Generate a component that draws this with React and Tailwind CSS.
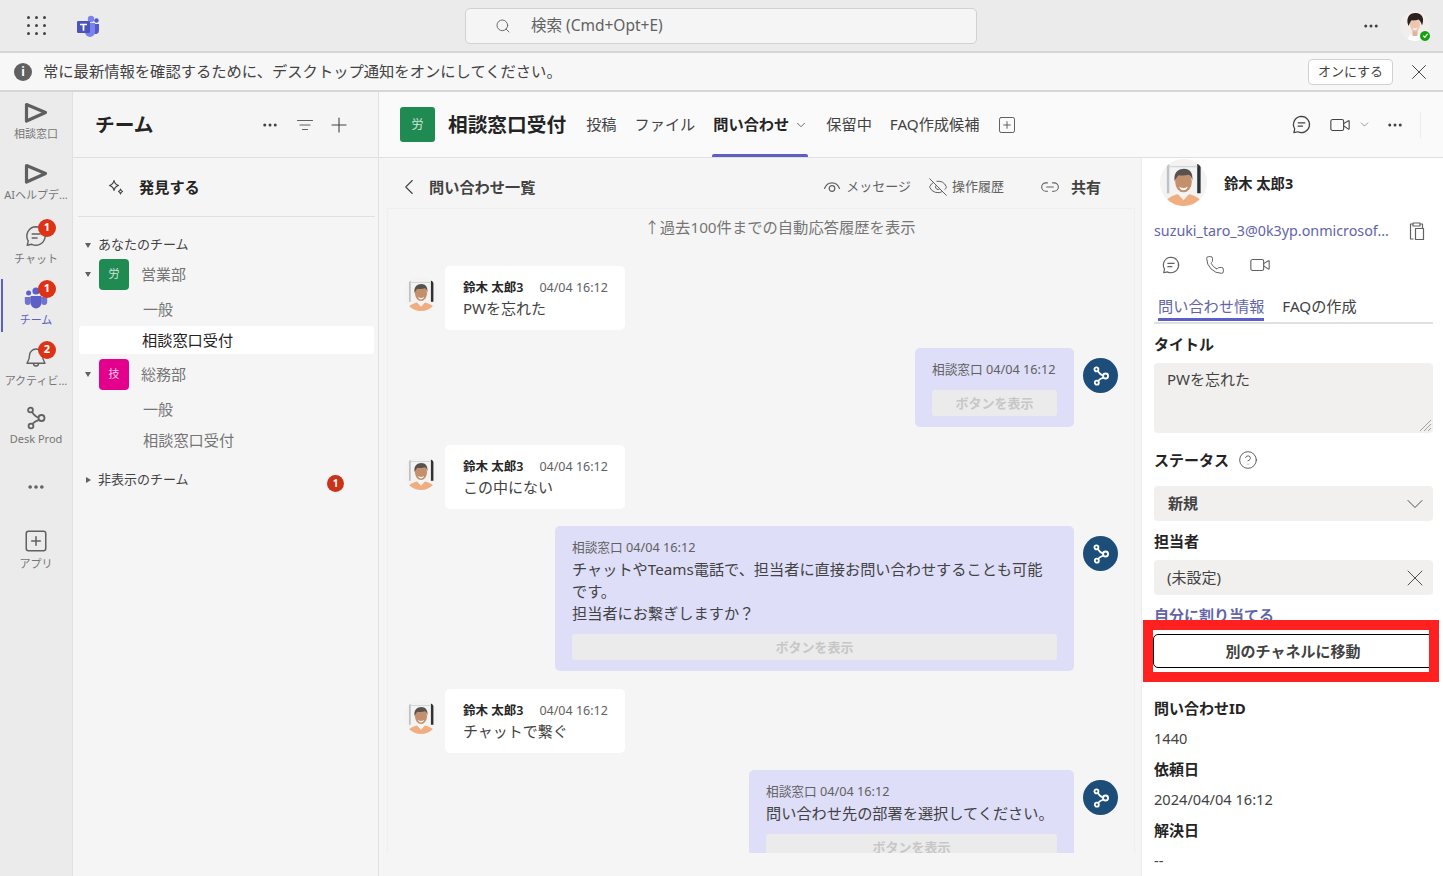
import React from 'react';
import {
  ChevronDown,
  ChevronLeft,
  CircleHelp,
  Ellipsis,
  EyeOff,
  Link2,
  Phone,
  Plus,
  Search,
  SquarePlus,
  Video,
  X,
} from 'lucide-react';

const FONT = { fontFamily: '"Noto Sans", "Noto Sans CJK JP", sans-serif' };

function PlayLogo() {
  return (
    <svg width="24" height="22" viewBox="0 0 24 22" fill="none">
      <path d="M2.5 2.5 L21.5 10.5 L2.5 19 Z" stroke="#5f5f5f" strokeWidth="3.2" strokeLinejoin="round" />
    </svg>
  );
}

function ChatIcon({ size = 22, color = '#424242' }) {
  return (
    <svg width={size} height={size} viewBox="0 0 22 22" fill="none" stroke={color} strokeWidth="1.3" strokeLinecap="round">
      <path d="M11 2.5a8.5 8.5 0 1 1-3.9 16.1L3 19.5l.9-4A8.5 8.5 0 0 1 11 2.5Z" strokeLinejoin="round" />
      <path d="M7.5 9.2h7M7.5 12.8h4.5" />
    </svg>
  );
}

function NodesIcon({ size = 24, color = '#616161', width = 1.8 }) {
  return (
    <svg width={size} height={size} viewBox="0 0 24 24" fill="none" stroke={color} strokeWidth={width}>
      <circle cx="6.5" cy="4" r="2.4" />
      <circle cx="17.5" cy="12" r="3" />
      <circle cx="7" cy="20" r="2.4" />
      <path d="M8 6 C10 9 12 11 14.6 11.6 M15 13.8 C12 14.8 9.8 16 8.2 18" />
    </svg>
  );
}

function TeamsIcon() {
  return (
    <svg width="24" height="22" viewBox="0 0 24 22">
      <circle cx="15" cy="4" r="3.2" fill="#7b83eb" />
      <circle cx="20.5" cy="5.5" r="2.2" fill="#5059c9" />
      <path d="M17 9h6v6.5a3.5 3.5 0 0 1-6 2.5Z" fill="#5059c9" />
      <path d="M9 8h10v9a5 5 0 0 1-10 0Z" fill="#7b83eb" />
      <rect x="1" y="6" width="13" height="12" rx="1.2" fill="#4b53bc" />
      <path d="M4 8.7h7v1.6H8.4v5.5H6.6v-5.5H4Z" fill="#fff" />
    </svg>
  );
}

function TeamPeopleIcon() {
  return (
    <svg width="24" height="24" viewBox="0 0 24 24" fill="#5b5fc7">
      <circle cx="12" cy="6" r="3.6" />
      <circle cx="4.6" cy="8" r="2.5" />
      <circle cx="19.4" cy="8" r="2.5" />
      <path d="M0.8 12h6v5a3 3 0 0 1-6 0Z" opacity="0.85" />
      <path d="M17.2 12h6v5a3 3 0 0 1-6 0Z" opacity="0.85" />
      <path d="M6.6 11h10.8v7a5.4 5.4 0 0 1-10.8 0Z" />
    </svg>
  );
}

function BellIcon() {
  return (
    <svg width="24" height="24" viewBox="0 0 24 24" fill="none" stroke="#616161" strokeWidth="1.4" strokeLinejoin="round">
      <path d="M12 3a6.5 6.5 0 0 0-6.5 6.5c0 4-1.6 6.3-2.5 7.8h18c-.9-1.5-2.5-3.8-2.5-7.8A6.5 6.5 0 0 0 12 3Z" />
      <path d="M9.5 17.5a2.5 2.5 0 0 0 5 0" />
    </svg>
  );
}

function ManAvatar({ size = 34 }) {
  return (
    <div className="shrink-0 rounded-full overflow-hidden" style={{ width: size, height: size }}>
      <svg width={size} height={size} viewBox="0 0 48 48">
        <rect width="48" height="48" fill="#f4f3f1" />
        <rect x="7" y="5" width="2.5" height="30" fill="#b9c4c9" />
        <rect x="38" y="5" width="3.5" height="30" fill="#2b3236" />
        <rect x="9" y="7" width="29" height="1.5" fill="#cfd8dc" />
        <path d="M4 48c1-8 9-10.5 14-12h12c5 1.5 13 4 14 12Z" fill="#f0ad80" />
        <path d="M18.5 36l5.5 6 5.5-6-1-4h-9Z" fill="#f5f5f5" />
        <ellipse cx="24" cy="23" rx="8.5" ry="11" fill="#c48f6c" />
        <path d="M15 23c-1.5-9 3.5-13 9.5-13S34 14.5 33 22c-.8-3.5-2-5.5-3.5-6-4 1-7.5 1-10.5.5-1.5 1.5-3 3.5-4 6.5Z" fill="#57524e" />
        <path d="M19.5 28c3 2.2 6 2.2 9 0-1 2.8-2.7 3.8-4.5 3.8S20.5 30.8 19.5 28Z" fill="#fff" />
      </svg>
    </div>
  );
}

function WomanAvatar() {
  return (
    <div className="w-[30px] h-[30px] rounded-full overflow-hidden">
      <svg width="30" height="30" viewBox="0 0 30 30">
        <rect width="30" height="30" fill="#f1eeec" />
        <path d="M7 30c1-5 3.5-7 8-7s7 2 8 7Z" fill="#fff" />
        <rect x="12.5" y="18" width="5" height="7" fill="#e0b49a" />
        <ellipse cx="15" cy="13.5" rx="5" ry="7" fill="#edc6ae" />
        <path d="M8.5 15C5 6 10.5 1.5 16 2c5.5.5 9 4.5 6 12.5-.8-3-2-5-3.5-6-3 1-5.5 1-7 .8-1.2 1.5-2 3.7-3 5.7Z" fill="#2c211c" />
        <path d="M12.5 16.5c1.5 1.2 3.5 1.2 5 0-.5 1.8-1.5 2.3-2.5 2.3s-2-.5-2.5-2.3Z" fill="#fff" />
      </svg>
    </div>
  );
}

function Badge({ n }) {
  return (
    <span className="absolute -top-[5px] left-[14px] w-[18px] h-[18px] rounded-full bg-[#dc3317] text-white text-[11px] font-bold flex items-center justify-center">
      {n}
    </span>
  );
}

function RailItem({ icon, label, badge, active, tight }) {
  return (
    <div className={`relative h-[61px] flex flex-col items-center justify-center ${tight ? 'pb-[3px]' : ''}`}>
      {active && <span className="absolute left-px top-[4px] w-[2px] h-[53px] bg-[#5b5fc7]" />}
      <div className="relative w-[24px] h-[24px] flex items-center justify-center">
        {icon}
        {badge && <Badge n={badge} />}
      </div>
      <span className={`${tight ? 'mt-px' : 'mt-[3px]'} text-[11px] leading-[15px] whitespace-nowrap ${active ? 'text-[#5b5fc7]' : 'text-[#757575]'}`}>
        {label}
      </span>
    </div>
  );
}

function Rail() {
  return (
    <div className="w-[73px] shrink-0 bg-[#ebebeb] border-r border-[#e0e0e0]">
      <RailItem icon={<PlayLogo />} label="相談窓口" tight />
      <RailItem icon={<PlayLogo />} label="AIヘルプデ..." tight />
      <RailItem icon={<ChatIcon size={26} color="#616161" />} label="チャット" badge="1" />
      <RailItem icon={<TeamPeopleIcon />} label="チーム" badge="1" active />
      <RailItem icon={<BellIcon />} label="アクティビ..." badge="2" />
      <RailItem icon={<NodesIcon size={26} />} label="Desk Prod" tight />
      <div className="h-[58px] flex items-center justify-center">
        <Ellipsis size={20} color="#616161" strokeWidth={2.4} />
      </div>
      <div className="mt-[7px] h-[52px] flex flex-col items-center justify-center">
        <SquarePlus size={26} color="#616161" strokeWidth={1.4} />
        <span className="mt-[2px] text-[11px] leading-[15px] text-[#757575]">アプリ</span>
      </div>
    </div>
  );
}

function Caret({ right }) {
  return (
    <span
      className={
        right
          ? 'w-0 h-0 border-y-[3.5px] border-y-transparent border-l-[5px] border-l-[#616161]'
          : 'w-0 h-0 border-x-[3.5px] border-x-transparent border-t-[5px] border-t-[#616161]'
      }
    />
  );
}

function TeamRow({ color, mark, name }) {
  return (
    <div className="flex items-center h-[31px] pl-[12px]">
      <Caret />
      <div className={`ml-[8px] w-[30px] h-[31px] rounded-[4px] flex items-center justify-center text-[11px] text-white/80 ${color}`}>
        {mark}
      </div>
      <span className="ml-[12px] text-[15px] text-[#757575]">{name}</span>
    </div>
  );
}

function Sidebar() {
  return (
    <div className="w-[306px] shrink-0 bg-[#f5f5f5] border-r border-[#e0e0e0]">
      <div className="h-[66px] border-b border-[#e0e0e0] flex items-center pl-[22px] pr-[27px]">
        <span className="text-[19.7px] font-bold text-[#242424]">チーム</span>
        <div className="ml-auto flex items-center">
          <Ellipsis size={18} color="#424242" strokeWidth={2} />
          <svg className="ml-[17px]" width="18" height="18" viewBox="0 0 18 18" stroke="#616161" strokeWidth="1.2" strokeLinecap="round">
            <path d="M1.5 4.5h15M4 9h10M6.5 13.5h5" />
          </svg>
          <Plus className="ml-[13px]" size={24} color="#424242" strokeWidth={1.1} />
        </div>
      </div>
      <div className="ml-[5px] mr-[3px] h-[59px] border-b border-[#e0e0e0] flex items-center pl-[29px]">
        <svg width="18" height="18" viewBox="0 0 18 18" fill="none" stroke="#424242" strokeWidth="1.2" strokeLinejoin="round">
          <path d="M7 2.5 C7.5 5.5 8.5 6.5 11.5 7.5 C8.5 8.5 7.5 9.5 7 12.5 C6.5 9.5 5.5 8.5 2.5 7.5 C5.5 6.5 6.5 5.5 7 2.5Z" />
          <path d="M13.5 11 C13.7 12.5 14.2 13 15.5 13.5 C14.2 14 13.7 14.5 13.5 16 C13.3 14.5 12.8 14 11.5 13.5 C12.8 13 13.3 12.5 13.5 11Z" />
        </svg>
        <span className="ml-[14px] text-[15.2px] font-bold text-[#242424]">発見する</span>
      </div>
      <div className="mt-[18px] h-[20px] flex items-center pl-[12px]">
        <Caret />
        <span className="ml-[7px] text-[13px] text-[#424242]">あなたのチーム</span>
      </div>
      <div className="mt-[4px]">
        <TeamRow color="bg-[#1f8a52]" mark="労" name="営業部" />
      </div>
      <div className="mt-[4px] h-[30px] flex items-center pl-[70px] text-[15px] text-[#757575]">一般</div>
      <div className="mt-[2px] ml-[6px] mr-[4px] h-[28px] rounded-[4px] bg-white flex items-center pl-[63px] text-[15.2px] text-[#242424]">相談窓口受付</div>
      <div className="mt-[5px]">
        <TeamRow color="bg-[#e3008c]" mark="技" name="総務部" />
      </div>
      <div className="mt-[4px] h-[30px] flex items-center pl-[70px] text-[15px] text-[#757575]">一般</div>
      <div className="mt-px h-[30px] flex items-center pl-[70px] text-[15.2px] text-[#757575]">相談窓口受付</div>
      <div className="mt-[15px] h-[20px] flex items-center pl-[13px] pr-[34px]">
        <Caret right />
        <span className="ml-[7px] text-[13px] text-[#424242]">非表示のチーム</span>
        <span className="ml-auto mt-[6px] w-[17px] h-[17px] rounded-full bg-[#c9331a] text-white text-[10px] font-bold flex items-center justify-center">1</span>
      </div>
    </div>
  );
}

function ChannelHeader() {
  return (
    <div className="h-[66px] shrink-0 bg-[#fafafa] border-b border-[#e0e0e0] flex items-center pl-[21px]">
      <div className="w-[35px] h-[35px] rounded-[3px] bg-[#1f8a52] text-white/80 text-[12px] flex items-center justify-center">労</div>
      <span className="ml-[13px] text-[19.7px] font-bold text-[#242424]">相談窓口受付</span>
      <div className="ml-[20px] flex items-center h-full text-[15.2px] text-[#424242] gap-[18px]">
        <span>投稿</span>
        <span>ファイル</span>
        <div className="relative h-full flex items-center w-[96px] pl-px -ml-px">
          <span className="font-bold text-[#242424]">問い合わせ</span>
          <ChevronDown size={14} color="#424242" strokeWidth={1.3} className="ml-[5px]" />
          <span className="absolute left-0 right-0 bottom-0 h-[3px] rounded-t-[2px] bg-[#5b5fc7]" />
        </div>
        <span>保留中</span>
        <span>FAQ作成候補</span>
        <SquarePlus size={20} color="#616161" strokeWidth={1.2} />
      </div>
      <div className="ml-auto flex items-center pr-[22px]">
        <ChatIcon size={21} />
        <Video size={22} color="#424242" strokeWidth={1.2} className="ml-[17px]" />
        <ChevronDown size={13} color="#757575" strokeWidth={1.3} className="ml-[7px]" />
        <Ellipsis size={18} color="#424242" strokeWidth={2} className="ml-[15px]" />
        <span className="ml-[16px] w-px h-[26px] bg-[#ececec]" />
      </div>
    </div>
  );
}

function CustomerMsg({ text }) {
  return (
    <div className="flex items-start pl-[16px]">
      <div className="mt-[11px] w-[41px]">
        <ManAvatar />
      </div>
      <div className="w-[180px] h-[64px] bg-white rounded-[5px] pl-[18px] pt-[12px]">
        <div className="h-[20px] flex items-center gap-[16px] text-[12.5px] whitespace-nowrap">
          <span className="font-semibold text-[#242424]">鈴木 太郎3</span>
          <span className="text-[#616161]">04/04 16:12</span>
        </div>
        <div className="-mt-px h-[22px] flex items-center text-[15px] text-[#424242]">{text}</div>
      </div>
    </div>
  );
}

function BotMsg({ width, lines }) {
  return (
    <div className="flex items-start justify-end pr-[16px] gap-[9px]">
      <div className="bg-[#dedef8] rounded-[5px] px-[17px] pt-[12px] pb-[11px]" style={{ width }}>
        <div className="h-[20px] flex items-center text-[12.7px] text-[#616161]">相談窓口 04/04 16:12</div>
        {lines && (
          <div className="text-[15.2px] leading-[22px] text-[#424242]">
            {lines.map((l) => (
              <div key={l}>{l}</div>
            ))}
          </div>
        )}
        <div className="mt-[10px] h-[26px] rounded-[3px] bg-[#ebebeb] flex items-center justify-center text-[13px] font-semibold text-[#c7c7c7]">
          <span className="mt-[2px]">ボタンを表示</span>
        </div>
      </div>
      <div className="mt-[10px] w-[35px] h-[35px] rounded-full bg-[#1d4e79] flex items-center justify-center">
        <NodesIcon size={20} color="#ffffff" width={2.2} />
      </div>
    </div>
  );
}

function Chat() {
  return (
    <div className="w-[762px] shrink-0 bg-[#f5f5f5]">
      <div className="h-[50px] pt-[8px] flex items-center pl-[17px] pr-[40px] text-[#424242]">
        <ChevronLeft size={26} strokeWidth={1} />
        <span className="ml-[7px] text-[15.2px] font-semibold">問い合わせ一覧</span>
        <div className="ml-auto flex items-center text-[13px] text-[#616161]">
          <svg width="18" height="18" viewBox="0 0 18 18" fill="none" stroke="#616161" strokeWidth="1.2" strokeLinecap="round">
            <path d="M1.5 10.5C3 6.5 6 4.8 9 4.8s6 1.7 7.5 5.7" />
            <circle cx="9" cy="10.5" r="2.8" />
          </svg>
          <span className="ml-[5px]">メッセージ</span>
          <EyeOff size={20} strokeWidth={1.2} className="ml-[17px]" />
          <span className="ml-[4px]">操作履歴</span>
          <Link2 size={20} strokeWidth={1.3} className="ml-[36px]" />
          <span className="ml-[11px] text-[15px] font-bold text-[#424242]">共有</span>
        </div>
      </div>
      <div className="ml-[8px] mr-[6px] h-[645px] border-x border-t border-[#efefef] overflow-hidden">
        <div className="h-[57px] pt-[6px] pl-[38px] text-center text-[15.3px] leading-[24px] text-[#757575]">↑過去100件までの自動応答履歴を表示</div>
        <div className="flex flex-col gap-[18px]">
          <CustomerMsg text="PWを忘れた" />
          <BotMsg width={159} />
          <CustomerMsg text="この中にない" />
          <div className="-mt-px">
            <BotMsg
              width={519}
              lines={['チャットやTeams電話で、担当者に直接お問い合わせすることも可能', 'です。', '担当者にお繋ぎしますか？']}
            />
          </div>
          <CustomerMsg text="チャットで繋ぐ" />
          <div className="-mt-px">
            <BotMsg width={325} lines={['問い合わせ先の部署を選択してください。']} />
          </div>
        </div>
      </div>
    </div>
  );
}

function FieldLabel({ children, className = '' }) {
  return <div className={`h-[20px] flex items-center text-[15px] font-bold text-[#242424] ${className}`}>{children}</div>;
}

function DetailPanel() {
  return (
    <div className="flex-1 bg-white border-l border-[#ececec] pl-[12px] pr-[10px] overflow-hidden">
      <div className="h-[50px] flex items-start pl-[6px] pt-px">
        <ManAvatar size={47} />
        <span className="ml-[17px] mt-[14px] text-[14.3px] font-bold text-[#242424]">鈴木 太郎3</span>
      </div>
      <div className="mt-[11px] h-[24px] flex items-center justify-between pr-[7px]">
        <span className="text-[14.3px] text-[#6264a7]">suzuki_taro_3@0k3yp.onmicrosof...</span>
        <svg width="18" height="20" viewBox="0 0 18 20" fill="none" stroke="#616161" strokeWidth="1.2" strokeLinejoin="round">
          <path d="M5 3H2.5v15h3M5 2h7v3H5ZM12 3h2.5v4M7.5 7.5h8V18.5h-8Z" />
        </svg>
      </div>
      <div className="mt-[10px] h-[24px] flex items-center gap-[24px] pl-[7px]">
        <ChatIcon size={20} color="#616161" />
        <Phone size={20} color="#616161" strokeWidth={1.2} />
        <Video size={22} color="#616161" strokeWidth={1.2} />
      </div>
      <div className="mt-[19px] h-[28px] border-b-2 border-[#e0e0e0] flex items-start pl-[4px] gap-[18px] text-[15.2px]">
        <span className="h-[25px] border-b-[3px] border-[#5b5fc7] leading-[21px] text-[#6264a7]">問い合わせ情報</span>
        <span className="leading-[21px] text-[#424242]">FAQの作成</span>
      </div>
      <FieldLabel className="mt-[10px]">タイトル</FieldLabel>
      <div className="relative mt-[9px] h-[70px] rounded-[4px] bg-[#f1f0ef] pl-[13px] pt-[5px] text-[15px] text-[#424242]">
        PWを忘れた
        <svg className="absolute right-px bottom-px" width="13" height="13" viewBox="0 0 13 13" stroke="#8a8a8a" strokeWidth="0.8">
          <path d="M1 12 12 1M5 12l7-7M9 12l3-3" />
        </svg>
      </div>
      <FieldLabel className="mt-[17px]">
        ステータス
        <CircleHelp size={20} color="#424242" strokeWidth={1} className="ml-[9px]" />
      </FieldLabel>
      <div className="mt-[16px] h-[35px] rounded-[4px] bg-[#f1f0ef] flex items-center justify-between pl-[14px] pr-[4px]">
        <span className="text-[15px] font-bold text-[#424242]">新規</span>
        <ChevronDown size={28} color="#424242" strokeWidth={0.8} />
      </div>
      <FieldLabel className="mt-[10px]">担当者</FieldLabel>
      <div className="mt-[9px] h-[35px] rounded-[4px] bg-[#f1f0ef] flex items-center justify-between pl-[13px] pr-[4px]">
        <span className="-mt-px text-[15px] text-[#424242]">(未設定)</span>
        <X size={28} color="#424242" strokeWidth={0.8} />
      </div>
      <div className="mt-[10px] h-[20px] flex items-center text-[15px] font-bold text-[#6264a7]">自分に割り当てる</div>
      <div className="mt-[9px] -ml-px h-[34px] rounded-[5px] border border-black bg-white flex items-center justify-center text-[15px] font-semibold text-[#424242]">
        別のチャネルに移動
      </div>
      <FieldLabel className="mt-[30px]">問い合わせID</FieldLabel>
      <div className="mt-[11px] h-[20px] flex items-center text-[14.6px] text-[#424242]">1440</div>
      <FieldLabel className="mt-[10px]">依頼日</FieldLabel>
      <div className="mt-[11px] h-[20px] flex items-center text-[14.6px] text-[#424242]">2024/04/04 16:12</div>
      <FieldLabel className="mt-[10px]">解決日</FieldLabel>
      <div className="mt-[11px] h-[20px] flex items-center text-[14.6px] text-[#424242]">--</div>
    </div>
  );
}

function TopBar() {
  return (
    <div className="h-[53px] shrink-0 bg-[#ebebeb] border-b-2 border-[#d6d6d6] flex items-center">
      <div className="ml-[27px] grid grid-cols-3 gap-[5px]">
        {Array.from({ length: 9 }).map((_, i) => (
          <span key={i} className="w-[3px] h-[3px] rounded-full bg-[#424242]" />
        ))}
      </div>
      <div className="ml-[30px]">
        <TeamsIcon />
      </div>
      <div className="ml-[365px] w-[512px] h-[36px] rounded-[5px] bg-[#f5f5f5] border border-[#d1d1d1] flex items-center pl-[29px] text-[15.5px] text-[#616161]">
        <Search size={16} strokeWidth={1.4} />
        <span className="ml-[20px]">検索 (Cmd+Opt+E)</span>
      </div>
      <div className="ml-auto mr-[13px] flex items-center">
        <Ellipsis size={18} color="#424242" strokeWidth={2} />
        <div className="relative ml-[20px]">
          <WomanAvatar />
          <span className="absolute right-[-1px] bottom-[-1px] w-[12px] h-[12px] rounded-full bg-[#13a10e] border border-white flex items-center justify-center">
            <svg width="7" height="7" viewBox="0 0 8 8" fill="none" stroke="#fff" strokeWidth="1.5">
              <path d="M1.5 4.2 3.3 6 6.5 2.2" />
            </svg>
          </span>
        </div>
      </div>
    </div>
  );
}

function NoticeBar() {
  return (
    <div className="h-[39px] shrink-0 bg-[#f7f7f7] border-b-2 border-[#d6d6d6] flex items-center pl-[14px] pr-[11px]">
      <span className="w-[18px] h-[18px] rounded-full bg-[#616161] text-white text-[12px] font-bold flex items-center justify-center">i</span>
      <span className="ml-[11px] text-[15.3px] text-[#424242]">常に最新情報を確認するために、デスクトップ通知をオンにしてください。</span>
      <button className="ml-auto w-[85px] h-[26px] rounded-[4px] bg-white border border-[#d1d1d1] text-[13px] text-[#424242]">オンにする</button>
      <X size={26} color="#424242" strokeWidth={0.9} className="ml-[13px]" />
    </div>
  );
}

export default function App() {
  return (
    <div className="relative h-screen w-screen overflow-hidden flex flex-col bg-[#f5f5f5]" style={FONT}>
      <TopBar />
      <NoticeBar />
      <div className="flex-1 flex min-h-0">
        <Rail />
        <Sidebar />
        <div className="flex-1 flex flex-col min-w-0">
          <ChannelHeader />
          <div className="flex-1 flex min-h-0">
            <Chat />
            <DetailPanel />
          </div>
        </div>
      </div>
      {/* 注釈の赤枠 */}
      <div className="absolute left-[1143px] top-[620px] w-[296px] h-[62px] border-[10px] border-[#ff2020]" />
    </div>
  );
}
